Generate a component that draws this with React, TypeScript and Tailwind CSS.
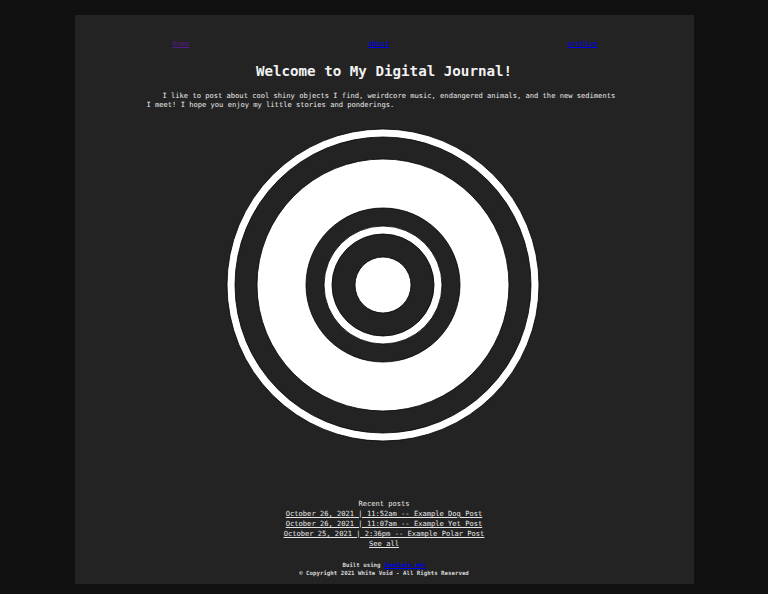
import React from "react";

const mono = { fontFamily: '"DejaVu Sans Mono", "Liberation Mono", monospace' };

function Disc() {
  return (
    <svg width="314" height="314" viewBox="0 0 314 314" className="block">
      <circle cx="157" cy="157" r="156" fill="#ffffff" stroke="#000" strokeWidth="0.8" />
      <circle cx="157" cy="157" r="148" fill="#232323" stroke="#000" strokeWidth="0.8" />
      <circle cx="157" cy="157" r="126" fill="#ffffff" stroke="#000" strokeWidth="0.8" />
      <circle cx="157" cy="157" r="77" fill="#232323" stroke="#000" strokeWidth="0.8" />
      <circle cx="157" cy="157" r="59" fill="#ffffff" stroke="#000" strokeWidth="0.8" />
      <circle cx="157" cy="157" r="51" fill="#232323" stroke="#000" strokeWidth="0.8" />
      <circle cx="157" cy="157" r="28" fill="#ffffff" stroke="#000" strokeWidth="0.8" />
    </svg>
  );
}

export default function App() {
  const posts = [
    "October 26, 2021 | 11:52am -- Example Dog Post",
    "October 26, 2021 | 11:07am -- Example Yet Post",
    "October 25, 2021 | 2:36pm -- Example Polar Post",
  ];
  return (
    <div className="w-full h-[594px] bg-[#111111] pt-[15px] overflow-hidden" style={mono}>
      <div className="w-[619px] h-[569px] mx-auto bg-[#232323] flex flex-col">
        <nav className="flex justify-between pl-[98px] pr-[96px] pt-[24px] text-[7.1px] leading-[9px]">
          <a href="#" className="underline text-[#551a8b]">home</a>
          <a href="#" className="underline text-[#0000ee]">about</a>
          <a href="#" className="underline text-[#0000ee]">archive</a>
        </nav>
        <h1 className="mt-[15px] text-center text-[14.2px] leading-[17px] font-bold text-[#f2f2f2]">
          Welcome to My Digital Journal!
        </h1>
        <p className="mt-[11px] mx-[72px] text-[7.1px] leading-[9px] text-[#ececec] indent-[16px]">
          I like to post about cool shiny objects I find, weirdcore music, endangered animals, and the new sediments I meet! I hope you enjoy my little stories and ponderings.
        </p>
        <div className="mt-[19px] flex justify-center pr-[2px]">
          <Disc />
        </div>
        <div className="mt-[57px] flex flex-col items-center text-[7.1px] leading-[10px] text-[#e8e8e8]">
          <div>Recent posts</div>
          {posts.map((p) => (
            <a key={p} href="#" className="underline text-[#e8e8e8] whitespace-pre">
              {p}
            </a>
          ))}
          <a href="#" className="underline text-[#e8e8e8]">See all</a>
        </div>
        <div className="mt-[12px] flex flex-col items-center text-[5.75px] leading-[8px] font-bold text-[#d8d8d8]">
          <div>
            Built using <a href="#" className="underline text-[#0000ee]">Zonelets.net</a>
          </div>
          <div>© Copyright 2021 White Void - All Rights Reserved</div>
        </div>
      </div>
    </div>
  );
}
